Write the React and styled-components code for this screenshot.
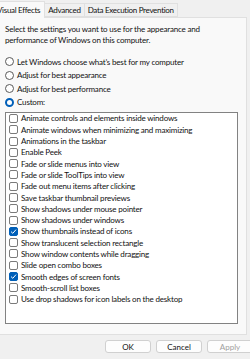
import React from "react";
import styled, { createGlobalStyle } from "styled-components";

const Global = createGlobalStyle`
  body {
    margin: 0;
    background: #f0f0f0;
    font-family: Lato, "Noto Sans", sans-serif;
    font-size: 8px;
    letter-spacing: -0.18px;
    line-height: 10px;
    color: #111;
  }
`;

const Window = styled.div`
  width: 250px;
  height: 359px;
  overflow: hidden;
  display: flex;
  flex-direction: column;
`;

const TabStrip = styled.div`
  display: flex;
  align-items: flex-end;
  height: 17px;
  margin-left: -7px;
`;

const Tab = styled.div`
  height: ${p => (p.active ? "16px" : "12px")};
  padding: 0 ${p => (p.active ? "4px" : "3px")};
  margin-left: -1px;
  margin-bottom: ${p => (p.active ? "-1px" : "0")};
  background: ${p => (p.active ? "#f9f9f9" : "#f0f0f0")};
  border: 1px solid #e0e0e0;
  border-bottom: ${p => (p.active ? "none" : "1px solid #e0e0e0")};
  letter-spacing: -0.3px;
  display: flex;
  align-items: center;
  white-space: nowrap;
  position: relative;
  z-index: ${p => (p.active ? 1 : 0)};
`;

const Panel = styled.div`
  width: 247px;
  height: 318px;
  background: #f9f9f9;
  border: 1px solid #e0e0e0;
  border-left: none;
  box-sizing: border-box;
  padding: 6px 8px 0 5px;
  display: flex;
  flex-direction: column;
`;

const Intro = styled.p`
  margin: 0;
  line-height: 10.5px;
`;

const RadioGroup = styled.div`
  margin-top: 11px;
  display: flex;
  flex-direction: column;
  gap: 2.6px;
`;

const RadioRow = styled.label`
  display: flex;
  align-items: center;
  gap: 3px;
  height: 11px;
`;

const RadioCircle = styled.span`
  width: 9px;
  height: 9px;
  border-radius: 50%;
  box-sizing: border-box;
  border: ${p => (p.checked ? "2.5px solid #005fb8" : "1px solid #5a5a5a")};
  background: #fff;
  flex: none;
`;

const ListBox = styled.div`
  margin-top: 4px;
  height: 212px;
  background: #fff;
  border: 1px solid #828282;
  box-sizing: border-box;
  padding: 0 0 0 3px;
  display: flex;
  flex-direction: column;
`;

const CheckRow = styled.label`
  display: flex;
  align-items: center;
  gap: 3px;
  height: 11.3px;
  flex: none;
  white-space: nowrap;
`;

const Box = styled.span`
  width: 9px;
  height: 9px;
  box-sizing: border-box;
  border-radius: 2px;
  border: 1px solid ${p => (p.checked ? "#005fb8" : "#7a7a7a")};
  background: ${p => (p.checked ? "#005fb8" : "#fff")};
  flex: none;
  display: flex;
  align-items: center;
  justify-content: center;
`;

const Footer = styled.div`
  flex: 1;
  display: flex;
  justify-content: flex-end;
  align-items: flex-start;
  gap: 5px;
  padding-top: 5px;
  margin-right: -3px;
`;

const Button = styled.button`
  width: 46px;
  height: 13px;
  padding: 0;
  border: 1px solid #d0d0d0;
  border-radius: 3px;
  background: #fdfdfd;
  font: inherit;
  color: ${p => (p.disabled ? "#a0a0a0" : "#111")};
  display: flex;
  align-items: center;
  justify-content: center;
`;

const items = [
  ["Animate controls and elements inside windows", false],
  ["Animate windows when minimizing and maximizing", false],
  ["Animations in the taskbar", false],
  ["Enable Peek", false],
  ["Fade or slide menus into view", false],
  ["Fade or slide ToolTips into view", false],
  ["Fade out menu items after clicking", false],
  ["Save taskbar thumbnail previews", false],
  ["Show shadows under mouse pointer", false],
  ["Show shadows under windows", false],
  ["Show thumbnails instead of icons", true],
  ["Show translucent selection rectangle", false],
  ["Show window contents while dragging", false],
  ["Slide open combo boxes", false],
  ["Smooth edges of screen fonts", true],
  ["Smooth-scroll list boxes", false],
  ["Use drop shadows for icon labels on the desktop", false],
];

const radios = [
  ["Let Windows choose what\u2019s best for my computer", false],
  ["Adjust for best appearance", false],
  ["Adjust for best performance", false],
  ["Custom:", true],
];

export default function App() {
  return (
    <Window>
      <Global />
      <TabStrip>
        <Tab active>Visual Effects</Tab>
        <Tab>Advanced</Tab>
        <Tab>Data Execution Prevention</Tab>
      </TabStrip>
      <Panel>
        <Intro>
          Select the settings you want to use for the appearance and
          <br />
          performance of Windows on this computer.
        </Intro>
        <RadioGroup>
          {radios.map(([label, checked]) => (
            <RadioRow key={label}>
              <RadioCircle checked={checked} />
              {label}
            </RadioRow>
          ))}
        </RadioGroup>
        <ListBox>
          {items.map(([label, checked]) => (
            <CheckRow key={label}>
              <Box checked={checked}>
                {checked && (
                  <svg width="7" height="7" viewBox="0 0 7 7">
                    <path d="M1 3.6 L2.8 5.3 L6 1.6" fill="none" stroke="#fff" strokeWidth="1" />
                  </svg>
                )}
              </Box>
              {label}
            </CheckRow>
          ))}
        </ListBox>
      </Panel>
      <Footer>
        <Button>OK</Button>
        <Button>Cancel</Button>
        <Button disabled>Apply</Button>
      </Footer>
    </Window>
  );
}
